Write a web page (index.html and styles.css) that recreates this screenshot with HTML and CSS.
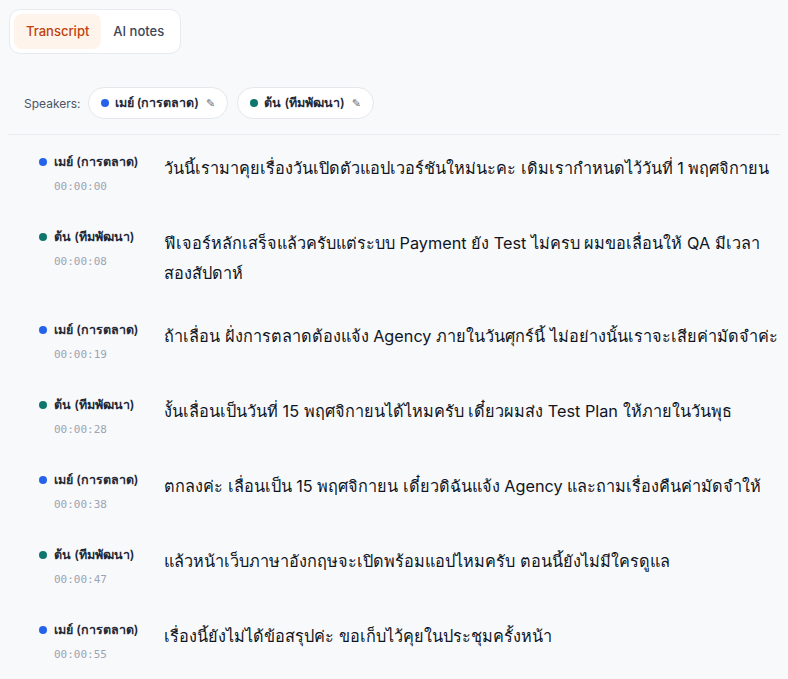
FILE: index.html
```html
<!DOCTYPE html>
<html lang="th">
<head>
<meta charset="utf-8">
<title>Transcript</title>
<link rel="stylesheet" href="styles.css">
</head>
<body>
<div class="page">
  <div class="tabs">
    <div class="tab active">Transcript</div>
    <div class="tab">AI notes</div>
  </div>

  <div class="speakers">
    <span class="speakers-label">Speakers:</span>
    <span class="pill"><span class="dot blue"></span><span class="pill-name">เมย์ (การตลาด)</span><span class="pencil">✎</span></span>
    <span class="pill"><span class="dot green"></span><span class="pill-name">ต้น (ทีมพัฒนา)</span><span class="pencil">✎</span></span>
  </div>

  <div class="list">
    <div class="row">
      <div class="meta"><div class="who"><span class="dot blue"></span>เมย์ (การตลาด)</div><div class="ts">00:00:00</div></div>
      <div class="text">วันนี้เรามาคุยเรื่องวันเปิดตัวแอปเวอร์ชันใหม่นะคะ เดิมเรากำหนดไว้วันที่ 1 พฤศจิกายน</div>
    </div>
    <div class="row">
      <div class="meta"><div class="who"><span class="dot green"></span>ต้น (ทีมพัฒนา)</div><div class="ts">00:00:08</div></div>
      <div class="text">ฟีเจอร์หลักเสร็จแล้วครับแต่ระบบ Payment ยัง Test ไม่ครบ ผมขอเลื่อนให้ QA มีเวลาสองสัปดาห์</div>
    </div>
    <div class="row">
      <div class="meta"><div class="who"><span class="dot blue"></span>เมย์ (การตลาด)</div><div class="ts">00:00:19</div></div>
      <div class="text">ถ้าเลื่อน ฝั่งการตลาดต้องแจ้ง Agency ภายในวันศุกร์นี้ ไม่อย่างนั้นเราจะเสียค่ามัดจำค่ะ</div>
    </div>
    <div class="row">
      <div class="meta"><div class="who"><span class="dot green"></span>ต้น (ทีมพัฒนา)</div><div class="ts">00:00:28</div></div>
      <div class="text">งั้นเลื่อนเป็นวันที่ 15 พฤศจิกายนได้ไหมครับ เดี๋ยวผมส่ง Test Plan ให้ภายในวันพุธ</div>
    </div>
    <div class="row">
      <div class="meta"><div class="who"><span class="dot blue"></span>เมย์ (การตลาด)</div><div class="ts">00:00:38</div></div>
      <div class="text">ตกลงค่ะ เลื่อนเป็น 15 พฤศจิกายน เดี๋ยวดิฉันแจ้ง Agency และถามเรื่องคืนค่ามัดจำให้</div>
    </div>
    <div class="row">
      <div class="meta"><div class="who"><span class="dot green"></span>ต้น (ทีมพัฒนา)</div><div class="ts">00:00:47</div></div>
      <div class="text">แล้วหน้าเว็บภาษาอังกฤษจะเปิดพร้อมแอปไหมครับ ตอนนี้ยังไม่มีใครดูแล</div>
    </div>
    <div class="row">
      <div class="meta"><div class="who"><span class="dot blue"></span>เมย์ (การตลาด)</div><div class="ts">00:00:55</div></div>
      <div class="text">เรื่องนี้ยังไม่ได้ข้อสรุปค่ะ ขอเก็บไว้คุยในประชุมครั้งหน้า</div>
    </div>
  </div>
</div>
</body>
</html>
```

FILE: styles.css
```css
* { box-sizing: border-box; }
html, body { margin: 0; padding: 0; }
body {
  background: #f8f9fb;
  font-family: "Inter", "Noto Sans", sans-serif;
  color: #111827;
}
.page { padding: 9px 8px 0 8px; }

.tabs {
  display: inline-flex;
  margin-left: 1px;
  padding: 4px;
  background: #ffffff;
  border: 1px solid #e8eaef;
  border-radius: 11px;
}
.tab {
  height: 35px;
  line-height: 35px;
  padding: 0 12px;
  font-size: 13px;
  font-weight: 500;
  color: #3b4658;
  border-radius: 8px;
}
.tab.active {
  background: #fff4eb;
  color: #c2410c;
}

.speakers {
  display: flex;
  align-items: center;
  gap: 9px;
  padding: 33px 16px 15px 16px;
  border-bottom: 1px solid #e9ebef;
}
.speakers-label {
  font-size: 12px;
  color: #4b5563;
  margin-right: -2px;
}
.pill {
  display: inline-flex;
  align-items: center;
  height: 32px;
  padding: 0 12px 0 12px;
  background: #ffffff;
  border: 1px solid #e5e7eb;
  border-radius: 16px;
  font-size: 12.5px;
  font-weight: 600;
  color: #1f2937;
}
.pill .dot { margin-right: 6px; }
.pencil {
  margin-left: 7px;
  font-size: 11px;
  color: #6b7280;
  font-family: "DejaVu Sans", sans-serif;
}

.dot {
  display: inline-block;
  width: 8px;
  height: 8px;
  border-radius: 50%;
  flex: none;
}
.dot.blue { background: #2563eb; }
.dot.green { background: #0f766e; }

.list { padding: 1px 0 0 16px; }
.row {
  display: flex;
  gap: 15px;
  padding: 16.5px 0 16.5px 15px;
}
.meta {
  width: 110px;
  flex: none;
}
.who {
  display: flex;
  align-items: center;
  gap: 7px;
  height: 18px;
  font-size: 12.5px;
  font-weight: 600;
  color: #1f2937;
  white-space: nowrap;
}
.ts {
  margin-top: 8px;
  padding-left: 15px;
  height: 16px;
  line-height: 16px;
  font-family: "DejaVu Sans Mono", "Liberation Mono", monospace;
  font-size: 11px;
  color: #9ca3b4;
}
.text {
  flex: 1;
  font-size: 16.25px;
  line-height: 30px;
  color: #0f1522;
}
```
